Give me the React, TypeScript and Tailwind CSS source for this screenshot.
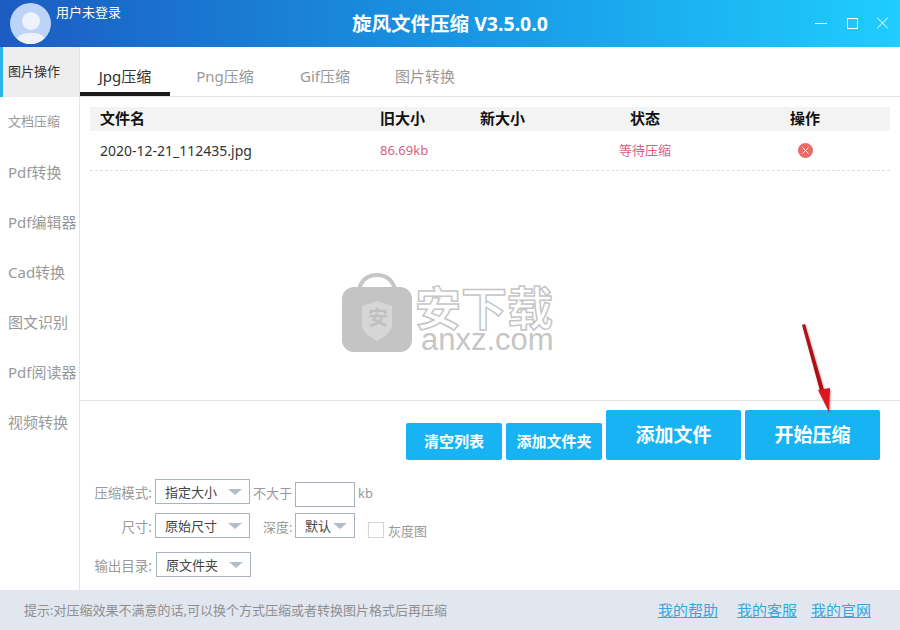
const navItems = ["图片操作", "文档压缩", "Pdf转换", "Pdf编辑器", "Cad转换", "图文识别", "Pdf阅读器", "视频转换"];
const tabs = ["Jpg压缩", "Png压缩", "Gif压缩", "图片转换"];

const Select = ({ label, className }: { label: string; className: string }) => (
  <div className={`flex h-[25px] items-center border border-[#a9b3bd] bg-white pl-[9px] text-[13px] text-[#444] ${className}`}>
    <span className="whitespace-nowrap pt-[3px]">{label}</span>
    <svg className="ml-auto mr-[7px] shrink-0" width="14" height="6" viewBox="0 0 14 6">
      <path d="M0 0h14L7 6z" fill="#b4bcc6" />
    </svg>
  </div>
);

const Watermark = () => (
  <div className="pointer-events-none absolute left-[262px] top-[176px] h-[82px] w-[216px]">
    <svg className="absolute left-0 top-0" width="72" height="82" viewBox="0 0 72 82">
      <path d="M17 16C20 6 27 2 35 2s15 4 18 14" fill="none" stroke="#c6c6c6" strokeWidth="4" />
      <rect x="0" y="14" width="70" height="65" rx="12" fill="#c4c4c4" />
      <path d="M20 33l15-5 15 5v19c0 7-8 12-15 16-7-4-15-9-15-16z" fill="#d6d6d6" />
    </svg>
    <span className="absolute left-[26px] top-[30px] text-[20px] font-bold leading-[30px] text-[#c0c0c0]">安</span>
    <span className="absolute left-[73px] top-[14px] whitespace-nowrap text-[46px] font-bold leading-[40px] text-transparent [-webkit-text-stroke:1.5px_#c6c6c6]">安下载</span>
    <span className="absolute left-[79px] top-[56px] font-['Liberation_Sans',sans-serif] text-[31px] leading-[22px] text-[#c6c6c6]">anxz.com</span>
  </div>
);

const RedArrow = () => (
  <svg className="pointer-events-none absolute left-[795px] top-[320px] drop-shadow-[1px_1px_1px_rgba(0,0,0,0.35)]" width="50" height="100" viewBox="0 0 50 100">
    <path d="M7 5l3-1 19 66-4 1z" fill="#b01015" />
    <path d="M23 70l12-2-1 24z" fill="#e0141c" />
  </svg>
);

export default function App() {
  return (
    <div className="relative flex h-[630px] w-[900px] flex-col overflow-hidden bg-white font-['Noto_Sans','Noto_Sans_CJK_SC',sans-serif]">
      {/* Title bar */}
      <header className="relative flex h-[47px] shrink-0 items-center justify-center bg-gradient-to-r from-[#1c5cc2] to-[#1fcdff]">
        <div className="absolute left-[10px] top-[3px] h-[41px] w-[41px] overflow-hidden rounded-full bg-[#bcd4f8]">
          <div className="mx-auto mt-[9px] h-[18px] w-[18px] rounded-full bg-[#edf2fb]" />
          <div className="mx-auto mt-[3px] h-[20px] w-[34px] rounded-t-[14px] bg-[#edf2fb]" />
        </div>
        <span className="absolute left-[56px] top-[3px] text-[13px] leading-[18px] text-white">用户未登录</span>
        <h1 className="text-[19.5px] font-bold text-white">旋风文件压缩 V3.5.0.0</h1>
        <div className="absolute right-[12px] top-[17px] flex items-center">
          <svg width="12" height="12" viewBox="0 0 12 12"><path d="M0 6.5h12" stroke="#fff" /></svg>
          <svg className="ml-[20px]" width="11" height="11" viewBox="0 0 11 11"><rect x="0.5" y="0.5" width="10" height="10" fill="none" stroke="#fff" /></svg>
          <svg className="ml-[19px]" width="11" height="12" viewBox="0 0 11 12"><path d="M0 0.5l11 11M11 0.5l-11 11" stroke="#fff" /></svg>
        </div>
      </header>

      <div className="flex min-h-0 flex-1">
        {/* Side menu */}
        <nav className="w-20 shrink-0 border-r border-[#e4e4e4]">
          {navItems.map((item, i) => (
            <div
              key={item}
              className={
                i === 0
                  ? "flex h-[50px] items-center whitespace-nowrap border-l-[3px] border-[#2bb5e8] bg-[#eeeeee] pl-[5px] text-[13px] text-[#333]"
                  : i === 1
                    ? "flex h-[50px] items-center whitespace-nowrap pl-2 text-[13px] text-[#999]"
                    : "flex h-[50px] items-center whitespace-nowrap pl-2 text-[15px] text-[#999]"
              }
            >
              {item}
            </div>
          ))}
        </nav>

        <main className="flex min-w-0 flex-1 flex-col">
          {/* Tabs */}
          <div className="flex h-[50px] shrink-0 gap-2.5 border-b border-[#e4e4e4]">
            {tabs.map((tab, i) => (
              <div
                key={tab}
                className={
                  i === 0
                    ? "flex h-[49px] w-[90px] items-center justify-center border-b-4 border-[#1a1a1a] pt-[14px] text-[15px] text-[#333]"
                    : "flex h-[49px] w-[90px] items-center justify-center whitespace-nowrap pt-2.5 text-[15px] text-[#999]"
                }
              >
                {tab}
              </div>
            ))}
          </div>

          {/* File list */}
          <div className="h-[303px] shrink-0 px-2.5 pt-2.5">
            <div className="grid h-6 grid-cols-[280px_100px_100px_130px_180px] items-center bg-[#f3f3f3] pb-[2px] pl-2.5 text-[15px] font-bold text-[#111]">
              <span>文件名</span>
              <span>旧大小</span>
              <span>新大小</span>
              <span className="text-center">状态</span>
              <span className="pl-2.5 text-center">操作</span>
            </div>
            <div className="grid h-[40px] grid-cols-[280px_100px_100px_130px_180px] items-center border-b border-dashed border-[#dedede] pl-2.5 text-[13px]">
              <span className="text-sm text-[#333]">2020-12-21_112435.jpg</span>
              <span className="text-[#d9607f]">86.69kb</span>
              <span />
              <span className="text-center text-[#d9607f]">等待压缩</span>
              <span className="flex justify-center pl-2.5">
                <svg width="15" height="15" viewBox="0 0 15 15">
                  <circle cx="7.5" cy="7.5" r="7.5" fill="#ec6a66" />
                  <path d="M4.5 4.5l6 6M10.5 4.5l-6 6" stroke="#fff" strokeWidth="0.9" />
                </svg>
              </span>
            </div>
          </div>

          {/* Controls */}
          <div className="flex min-h-0 flex-1 flex-col border-t border-[#e4e4e4]">
            <div className="flex items-end justify-end gap-1 pr-5 pt-[9px] font-bold text-white">
              <button className="h-[37px] w-[96px] rounded-[2px] bg-[#17b3f3] text-[15px]">清空列表</button>
              <button className="h-[37px] w-[96px] rounded-[2px] bg-[#17b3f3] text-[15px]">添加文件夹</button>
              <button className="h-[50px] w-[135px] rounded-[2px] bg-[#17b3f3] text-[19px]">添加文件</button>
              <button className="h-[50px] w-[135px] rounded-[2px] bg-[#17b3f3] text-[19px]">开始压缩</button>
            </div>

            <div className="flex flex-col pt-[19px] text-[13px] text-[#999]">
              <div className="flex h-[25px] items-center">
                <span className="w-[72px] shrink-0 whitespace-nowrap pt-1 text-right text-[13.5px]">压缩模式:</span>
                <Select label="指定大小" className="ml-[3px] w-[95px]" />
                <span className="ml-[3px] w-[42px] pt-1">不大于</span>
                <div className="mt-[6px] h-[25px] w-[60px] border border-[#a9b3bd]" />
                <span className="ml-[3px] pt-1">kb</span>
              </div>
              <div className="mt-[9px] flex h-[25px] items-center">
                <span className="w-[72px] shrink-0 pt-1 text-right text-[13.5px]">尺寸:</span>
                <Select label="原始尺寸" className="ml-[3px] w-[95px]" />
                <span className="ml-[13px] w-[32px] whitespace-nowrap pt-1">深度:</span>
                <Select label="默认" className="w-[60px]" />
                <div className="ml-[13px] mt-[9px] flex items-center gap-1">
                  <div className="h-4 w-4 border border-[#d4d4d4]" />
                  <span className="pt-[3px]">灰度图</span>
                </div>
              </div>
              <div className="mt-[14px] flex h-[25px] items-center">
                <span className="w-[72px] shrink-0 whitespace-nowrap pt-[3px] text-right text-[13.5px]">输出目录:</span>
                <Select label="原文件夹" className="ml-1 w-[95px]" />
              </div>
            </div>
          </div>
        </main>
      </div>

      {/* Footer */}
      <footer className="relative flex h-[40px] shrink-0 items-center bg-[#e2e6ef] pl-6 text-[13px] text-[#8f8f8f]">
        <span className="pt-[2px]">提示:对压缩效果不满意的话,可以换个方式压缩或者转换图片格式后再压缩</span>
        <div className="ml-auto flex pr-[29px] text-[15px] text-[#35a8de] underline">
          <a>我的帮助</a>
          <a className="ml-[19px]">我的客服</a>
          <a className="ml-[14px]">我的官网</a>
        </div>
      </footer>

      {/* Overlays */}
      <div className="pointer-events-none absolute inset-0">
        <div className="absolute left-[80px] top-[97px]">
          <Watermark />
        </div>
        <RedArrow />
      </div>
    </div>
  );
}
